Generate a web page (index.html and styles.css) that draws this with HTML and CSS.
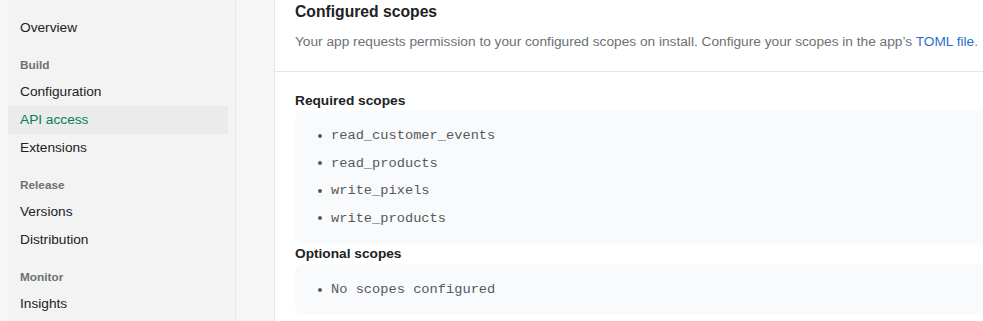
FILE: index.html
```html
<!DOCTYPE html>
<html lang="en">
<head>
  <meta charset="UTF-8" />
  <meta name="viewport" content="width=device-width, initial-scale=1.0"/>
  <title>API access</title>
  <link rel="stylesheet" href="styles.css">
</head>
<body>
  <div class="layout">
    <nav class="sidebar">
      <a class="nav-item">Overview</a>

      <div class="nav-heading">Build</div>
      <a class="nav-item">Configuration</a>
      <a class="nav-item active">API access</a>
      <a class="nav-item">Extensions</a>

      <div class="nav-heading">Release</div>
      <a class="nav-item">Versions</a>
      <a class="nav-item">Distribution</a>

      <div class="nav-heading">Monitor</div>
      <a class="nav-item">Insights</a>
    </nav>

    <main class="card">
      <div class="card-header">
        <h2>Configured scopes</h2>
        <p class="hint">Your app requests permission to your configured scopes on install. Configure your scopes in the app’s <a class="link">TOML file</a>.</p>
      </div>

      <div class="card-body">
        <h3>Required scopes</h3>
        <ul class="scope-list">
          <li>read_customer_events</li>
          <li>read_products</li>
          <li>write_pixels</li>
          <li>write_products</li>
        </ul>

        <h3>Optional scopes</h3>
        <ul class="scope-list short">
          <li>No scopes configured</li>
        </ul>
      </div>
    </main>
  </div>
</body>
</html>
```

FILE: styles.css
```css
body {
  margin: 0;
  font-family: 'Liberation Sans', Arial, sans-serif;
  background: #f6f6f6;
  color: #202223;
  overflow: hidden;
}
.layout {
  display: flex;
  align-items: stretch;
  height: 321px;
}
.sidebar {
  flex: 0 0 227px;
  margin-left: 8px;
  padding-top: 14px;
  background: #f3f3f3;
  border-right: 1px solid #e6e6e6;
  display: flex;
  flex-direction: column;
}
.nav-item {
  display: block;
  margin-right: 7px;
  padding-left: 12px;
  line-height: 28px;
  font-size: 13.7px;
  color: #202223;
}
.nav-item.active {
  background: #ebebeb;
  color: #008060;
}
.nav-heading {
  margin: 13px 0 3px;
  padding-left: 12px;
  line-height: 20px;
  font-size: 11.8px;
  font-weight: 700;
  color: #6d7175;
}
.card {
  flex: 0 0 740px;
  margin-left: 38px;
  background: #fff;
  border-left: 1px solid #e6e6e6;
}
.card-header {
  padding: 2px 20px 19px;
  border-bottom: 1px solid #e4e5e7;
}
h2 {
  margin: 0 0 10px;
  font-size: 15.7px;
  line-height: 20px;
  font-weight: 700;
}
.hint {
  margin: 0;
  font-size: 13.7px;
  line-height: 20px;
  color: #6d7175;
  white-space: nowrap;
}
.link {
  color: #2c6ecb;
}
.card-body {
  padding: 19px 20px 0;
}
h3 {
  margin: 0;
  font-size: 13.7px;
  line-height: 20px;
  font-weight: 700;
}
.scope-list {
  list-style: none;
  margin: 0;
  padding: 11px 0 12px 23px;
  background: #f9fafb;
  border-radius: 8px;
}
.scope-list.short {
  padding-top: 12px;
  padding-bottom: 11px;
}
.scope-list li {
  display: flex;
  align-items: center;
  gap: 9px;
  line-height: 27.5px;
  font-family: 'Liberation Mono', 'Courier New', monospace;
  font-size: 13.7px;
  color: #54595f;
}
.scope-list li::before {
  content: '';
  width: 4px;
  height: 4px;
  border-radius: 50%;
  background: #54595f;
}
```
